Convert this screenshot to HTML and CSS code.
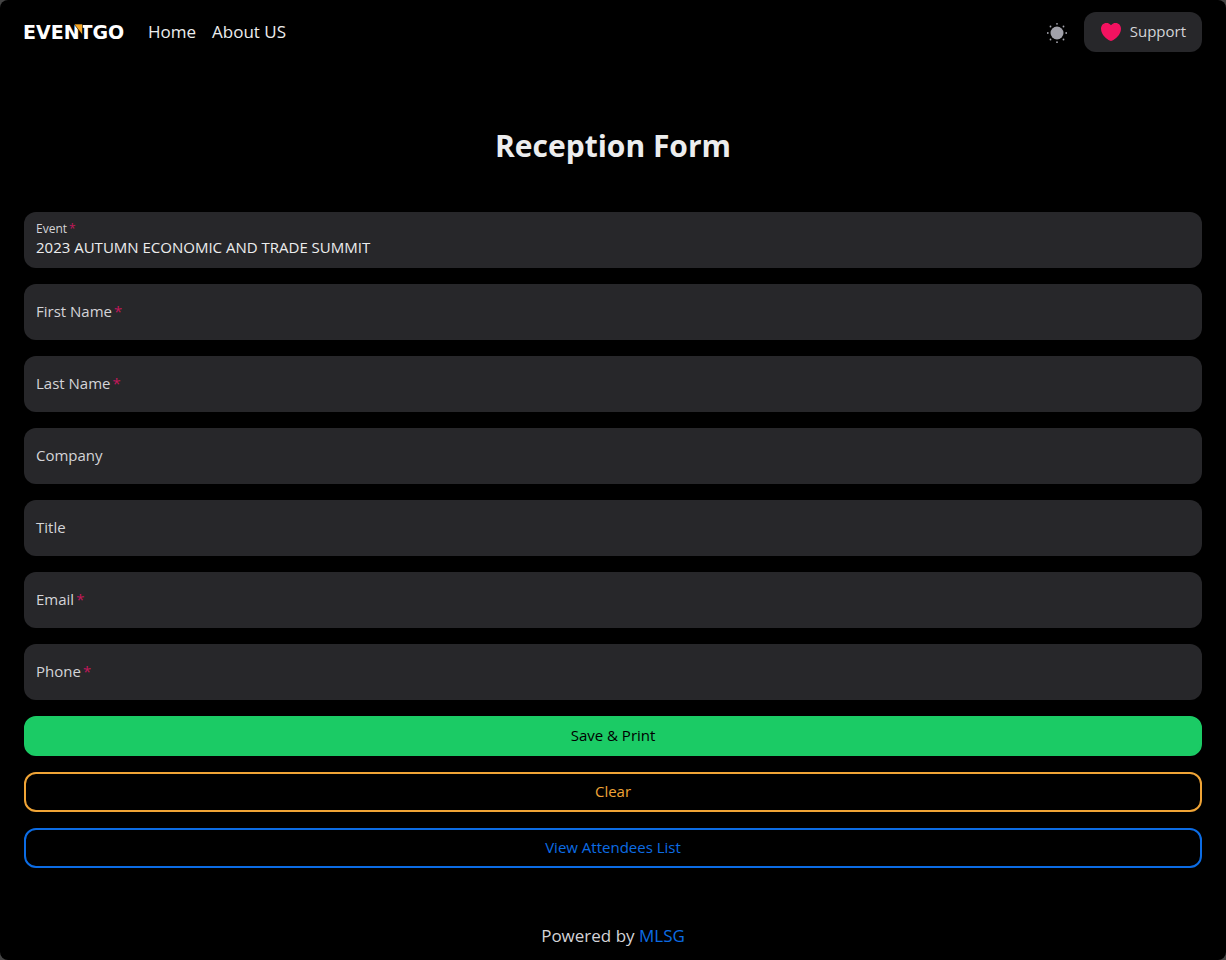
FILE: index.html
```html
<!DOCTYPE html>
<html lang="en">
<head>
<meta charset="utf-8">
<meta name="viewport" content="width=device-width, initial-scale=1">
<title>Reception Form</title>
<link rel="stylesheet" href="styles.css">
</head>
<body>
<header class="navbar">
  <nav class="nav-left">
    <a class="logo" href="#" aria-label="EventGo">
      <svg class="logo-art" width="102" height="24" viewBox="0 0 102 24">
        <text class="logo-text" x="-1" y="19">EVENTGO</text>
        <path d="M50 4h8.500v11z" fill="#f5a524" stroke="#000" stroke-width=".6"/>
      </svg>
    </a>
    <a class="nav-link" href="#">Home</a>
    <a class="nav-link" href="#">About US</a>
  </nav>
  <div class="nav-right">
    <button class="theme" type="button" aria-label="Switch theme">
      <svg width="22" height="22" viewBox="0 0 22 22" fill="#a1a1aa">
        <circle cx="11" cy="11" r="6.5"/>
        <circle cx="11" cy="1.8" r=".9"/><circle cx="11" cy="20.2" r=".9"/>
        <circle cx="1.8" cy="11" r=".9"/><circle cx="20.2" cy="11" r=".9"/>
        <circle cx="4.5" cy="4.5" r=".9"/><circle cx="17.5" cy="4.5" r=".9"/>
        <circle cx="4.5" cy="17.5" r=".9"/><circle cx="17.5" cy="17.5" r=".9"/>
      </svg>
    </button>
    <button class="support" type="button">
      <svg width="22" height="20" viewBox="0 0 22 20"><path fill="#f31260" d="M11 3.200C9.700 1.500 8 1 6.300 1 3.300 1 1 3.400 1 6.800 1 13 7.200 17.500 9.600 18.600c.9.400 1.900.4 2.800 0C14.800 17.500 21 13 21 6.800 21 3.400 18.700 1 15.700 1 14 1 12.300 1.500 11 3.200z"/></svg>
      <span class="support-text">Support</span>
    </button>
  </div>
</header>
<main class="content">
  <h1 class="title">Reception Form</h1>
  <form class="form">
    <div class="field filled">
      <label class="label required" for="event">Event</label>
      <input class="input" id="event" type="text" value="2023 AUTUMN ECONOMIC AND TRADE SUMMIT">
    </div>
    <div class="field">
      <label class="label required" for="first">First Name</label>
      <input class="input" id="first" type="text">
    </div>
    <div class="field">
      <label class="label required" for="last">Last Name</label>
      <input class="input" id="last" type="text">
    </div>
    <div class="field">
      <label class="label" for="company">Company</label>
      <input class="input" id="company" type="text">
    </div>
    <div class="field">
      <label class="label" for="job">Title</label>
      <input class="input" id="job" type="text">
    </div>
    <div class="field">
      <label class="label required" for="email">Email</label>
      <input class="input" id="email" type="email">
    </div>
    <div class="field">
      <label class="label required" for="phone">Phone</label>
      <input class="input" id="phone" type="tel">
    </div>
    <button class="button save" type="button">Save &amp; Print</button>
    <button class="button clear" type="button">Clear</button>
    <button class="button view" type="button">View Attendees List</button>
  </form>
</main>
<footer class="footer">Powered by <a class="footer-link" href="#">MLSG</a></footer>
</body>
</html>
```
FILE: styles.css
```css
* { box-sizing: border-box; }
html { background: #444; }
body {
  margin: 0;
  min-height: 100vh;
  display: flex;
  flex-direction: column;
  background: #000;
  border-radius: 8px;
  color: #ecedee;
  font-family: "Open Sans", "Noto Sans", sans-serif;
  font-size: 15px;
  line-height: 22px;
}
a { color: inherit; text-decoration: none; }
button, input { font: inherit; }
button { cursor: pointer; }
.navbar {
  height: 64px;
  padding: 0 24px;
  display: flex;
  align-items: center;
  justify-content: space-between;
}
.nav-left, .nav-right { display: flex; align-items: center; gap: 16px; }
.logo { display: flex; margin-right: 6px; }
.logo-art { overflow: visible; }
.logo-text {
  fill: #fff;
  font-family: "DejaVu Sans", sans-serif;
  font-weight: 700;
  font-size: 19px;
}
.nav-link { font-size: 17px; }
.theme {
  display: flex;
  padding: 2px 0 0;
  border: 0;
  background: none;
}
.support {
  height: 40px;
  padding: 0 16px;
  display: flex;
  align-items: center;
  gap: 8px;
  border: 0;
  border-radius: 12px;
  background: #27272a;
  color: #d4d4d8;
}
.support-text { padding-bottom: 2px; }
.content { padding: 64px 24px 0; }
.title {
  margin: 0 0 48px;
  text-align: center;
  font-size: 30px;
  line-height: 36px;
  font-weight: 700;
}
.form { display: flex; flex-direction: column; gap: 16px; }
.field {
  display: grid;
  height: 56px;
  border-radius: 12px;
  background: #27272a;
}
.label, .input { grid-area: 1 / 1; }
.label {
  align-self: center;
  padding: 0 12px 2px;
  color: #d4d4d8;
  pointer-events: none;
}
.required::after { content: "*"; margin-left: 2px; color: #c2185b; }
.input {
  width: 100%;
  min-width: 0;
  padding: 0 12px;
  border: 0;
  border-radius: 12px;
  outline: 0;
  background: none;
  color: #ecedee;
}
.filled .label { align-self: start; padding-top: 8px; font-size: 12px; line-height: 18px; }
.filled .input { padding-top: 14px; }
.button {
  height: 40px;
  padding: 0 16px 2px;
  border: 2px solid;
  border-radius: 12px;
  background: none;
}
.save { border-color: #1bcb65; background: #1bcb65; color: #000; }
.clear { border-color: #f0a436; color: #f0a436; }
.view { border-color: #0c6ce4; color: #0c6ce4; }
.footer {
  margin-top: auto;
  padding: 13px 24px;
  text-align: center;
  font-size: 17px;
  color: #d4d4d8;
}
.footer-link { color: #0c6ce4; }
```
